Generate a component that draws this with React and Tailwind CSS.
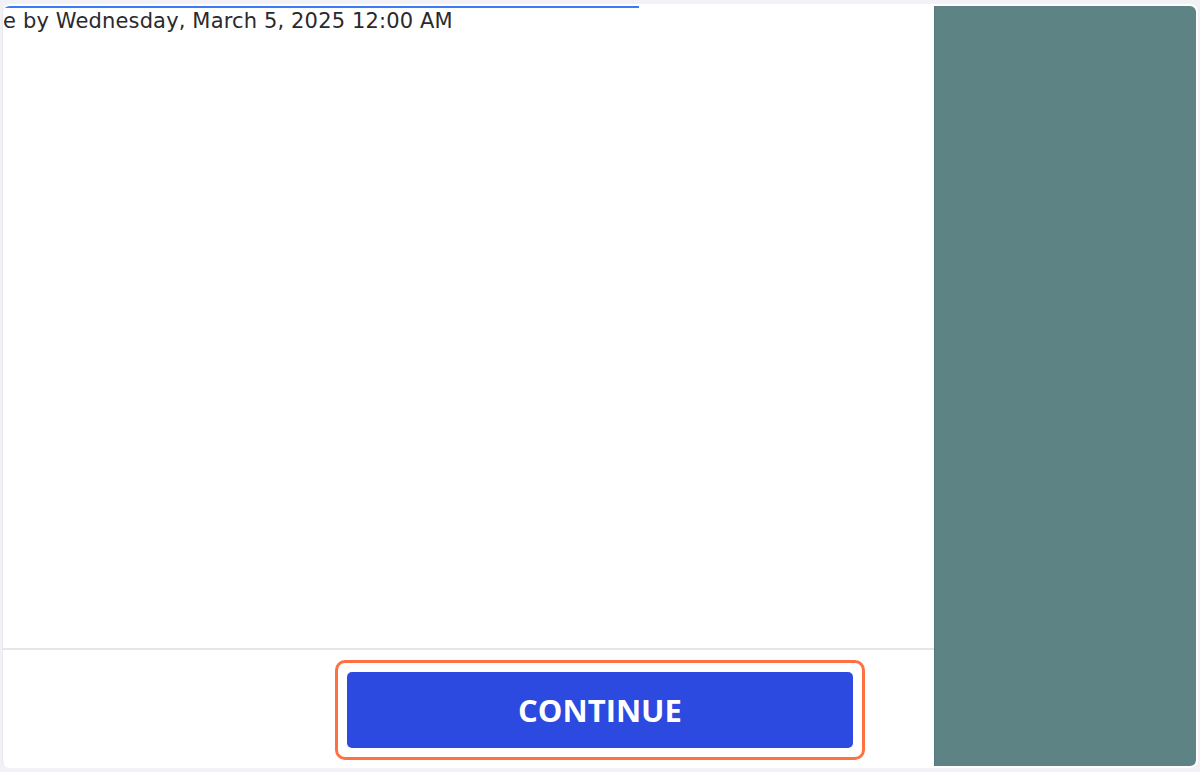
export default function App() {
  return (
    <div className="w-[1200px] h-[772px] bg-[#f2f1f6] pt-1 pl-0.5 pr-0.5 pb-1 font-['Open_Sans',sans-serif]">
      <div className="flex h-full rounded-lg overflow-hidden bg-white border-2 border-l border-white border-l-[#e9e8ee]">
        <div className="flex flex-col w-[931px] shrink-0">
          <div className="h-[2px] w-[636px] bg-[#3b7cf4]" />
          <div className="pt-[1px] pl-[0px] text-[21px] leading-[24px] tracking-[0.15px] text-[#2a2a2e] whitespace-nowrap font-['DejaVu_Sans',sans-serif]">
            e by Wednesday, March 5, 2025 12:00 AM
          </div>
          <div className="flex-1" />
          <div className="h-[2px] bg-[#e6e6ea]" />
          <div className="flex justify-end pr-[69px] pt-[10px] pb-[6px]">
            <div className="border-[3px] border-[#ff7043] rounded-[10px] p-[9px]">
              <button className="block w-[506px] h-[76px] rounded-[5px] bg-[#2c49e0] text-white text-[31px] leading-none font-bold">
                CONTINUE
              </button>
            </div>
          </div>
        </div>
        <div className="flex-1 bg-[#5e8384] border-l border-[#52777a]" />
      </div>
    </div>
  );
}
